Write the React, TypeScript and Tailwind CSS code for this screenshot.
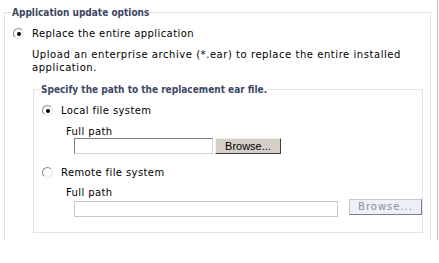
const font = { fontFamily: '"DejaVu Sans", Verdana, sans-serif' };
const legendFont = { fontFamily: '"DejaVu Sans Condensed", "DejaVu Sans", Verdana, sans-serif' };

function Radio({ checked }: { checked?: boolean }) {
  return (
    <span className="relative inline-flex h-[11px] w-[11px] shrink-0 items-center justify-center rounded-full border border-[#8a8a8a] border-r-[#e8e8e8] border-b-[#e8e8e8] bg-white">
      {checked && <span className="h-[4px] w-[4px] rounded-full bg-black" />}
    </span>
  );
}

export default function App() {
  return (
    <div className="h-[263px] w-[439px] bg-white text-[10px] leading-[13px] text-black" style={font}>
      <div className="flex">
        <fieldset className="ml-[4px] mt-[6px] w-[427px] border border-b-0 border-[#e4e4e4] pb-[6px] pl-[7px] pr-[6px]">
          <legend className="px-0 text-[10px] leading-[13px] font-bold text-[#3b4763]" style={legendFont}>
            Application update options
          </legend>
          <label className="mt-[8px] ml-[1px] flex items-center gap-[8px]">
            <Radio checked />
            <span className="tracking-[0.4px]">Replace the entire application</span>
          </label>
          <p className="mt-[8px] pl-[20px] tracking-[0.55px]">
            Upload an enterprise archive (*.ear) to replace the entire installed application.
          </p>
          <fieldset className="mt-[9px] ml-[21px] w-[390px] border border-[#e4e4e4] pb-[15px] pl-[7px] pr-0">
            <legend className="px-0 text-[10px] leading-[13px] font-bold text-[#3b4763]" style={legendFont}>
              Specify the path to the replacement ear file.
            </legend>
            <label className="mt-[8px] ml-[1px] flex items-center gap-[8px]">
              <Radio checked />
              <span className="tracking-[0.4px]">Local file system</span>
            </label>
            <div className="mt-[8px] pl-[25px] tracking-[0.4px]">Full path</div>
            <div className="flex items-center gap-[2px] pl-[33px]">
              <div className="h-[16px] w-[139px] border border-[#7f7f7f] border-r-[#d4d4d4] border-b-[#d4d4d4] bg-white" />
              <button
                className="h-[16px] w-[66px] border border-[#404040] border-l-[#f0f0f0] border-t-[#f0f0f0] bg-[#d4d0c8] text-[11px] leading-[14px] text-black"
                style={{ fontFamily: '"Liberation Sans", Arial, sans-serif' }}
              >
                Browse...
              </button>
            </div>
            <label className="mt-[12px] ml-[1px] flex items-center gap-[8px]">
              <Radio />
              <span className="tracking-[0.4px]">Remote file system</span>
            </label>
            <div className="mt-[7px] pl-[25px] tracking-[0.4px]">Full path</div>
            <div className="flex items-start gap-[11px] pl-[33px]">
              <div className="mt-[2px] h-[16px] w-[264px] border border-[#c8c8c8] bg-white" />
              <button className="h-[16px] w-[73px] border border-[#7a7f8c] border-l-[#c4c8d4] border-t-[#c4c8d4] bg-[#eef0f7] text-[10px] leading-[14px] tracking-[1px] text-[#8c8c96]">
                Browse...
              </button>
            </div>
          </fieldset>
        </fieldset>
        <div className="ml-[6px] h-[240px] w-[1px] bg-[#b8bcc8]" />
      </div>
    </div>
  );
}
